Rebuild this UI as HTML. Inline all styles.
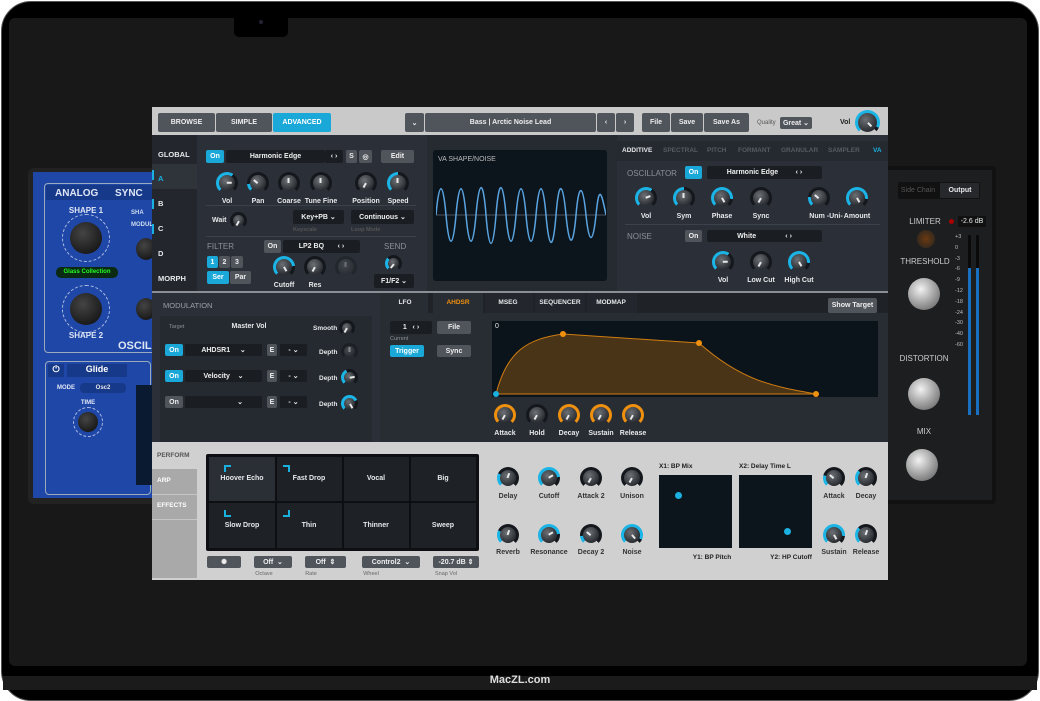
<!DOCTYPE html><html><head><meta charset="utf-8"><style>
*{margin:0;padding:0;box-sizing:border-box}
body{width:1040px;height:690px;background:#fff;position:relative;overflow:hidden;font-family:"Liberation Sans",sans-serif;font-weight:bold;color:#e6e8ea}
div,span{position:absolute}
.t{font-size:7px;white-space:nowrap;transform:translateX(-50%)}
.l{font-size:7px;white-space:nowrap}
.b{background:#50555c;border-radius:2px;font-size:7px;display:flex;align-items:center;justify-content:center;color:#eee}
.on{background:#1aa8d8;color:#fff}
.dk{background:#1a1e23}
.k{width:22px;height:22px;border-radius:50%;background:conic-gradient(from 225deg,var(--c,#1ab4e6) 0 var(--a,0deg),#14181c var(--a,0deg) 270deg,transparent 270deg)}
.k::after{content:"";position:absolute;left:3px;top:3px;right:3px;bottom:3px;border-radius:50%;background:radial-gradient(circle at 40% 35%,#6d7176,#2a2d31 70%)}
.k::before{content:"";position:absolute;left:50%;top:50%;width:1.5px;height:5px;margin-left:-0.75px;background:#e8e8e8;z-index:1;transform-origin:50% 0;transform:rotate(var(--r,180deg))}
.k.o{--c:#f0900f}
.m{border-radius:50%;background:radial-gradient(circle at 40% 35%,#f2f2f2,#9a9a9a 55%,#555 100%)}
.bk{border-radius:50%;background:radial-gradient(circle at 40% 35%,#444,#0b0b0b);box-shadow:0 0 0 4px rgba(255,255,255,.0)}
</style></head><body>
<!-- laptop -->
<div style="left:1px;top:1px;width:1038px;height:700px;background:#000;border-radius:30px;border:1px solid #555"></div>
<div style="left:9px;top:18px;width:1018px;height:648px;background:#181818;border-radius:6px"></div>
<div style="left:234px;top:17px;width:54px;height:20px;background:#000;border-radius:0 0 5px 5px"></div>
<div style="left:259px;top:20px;width:4px;height:4px;border-radius:50%;background:#223"></div>
<div style="left:3px;top:676px;width:1034px;height:14px;background:#1b1b1b"></div>
<div style="left:0;top:674px;width:1040px;text-align:center;font-size:11px;color:#ddd">MacZL.com</div>

<!-- blue synth -->
<div style="left:28px;top:168px;width:130px;height:336px;background:#222;border-radius:6px"></div>
<div style="left:33px;top:172px;width:122px;height:326px;background:#1f47a8"></div>
<div style="left:44px;top:183px;width:112px;height:170px;border:1px solid #9ab;border-radius:4px"></div>
<div style="left:46px;top:185px;width:110px;height:15px;background:#17398a"></div>
<div class="l" style="left:55px;top:188px;font-size:10px;color:#dfe6f5">ANALOG</div>
<div class="l" style="left:115px;top:188px;font-size:10px;color:#dfe6f5">SYNC</div>
<div class="t" style="left:86px;top:206px;font-size:8px;color:#dfe6f5">SHAPE 1</div>
<div style="left:62px;top:214px;width:48px;height:48px;border-radius:50%;border:1px dashed #cfd8f0;opacity:.8"></div>
<div class="bk" style="left:70px;top:222px;width:32px;height:32px"></div>
<div style="left:56px;top:267px;width:62px;height:11px;background:#0a2a14;border-radius:5px;font-size:6px;color:#2f2;text-align:center;line-height:11px">Glass Collection</div>
<div style="left:62px;top:285px;width:48px;height:48px;border-radius:50%;border:1px dashed #cfd8f0;opacity:.8"></div>
<div class="bk" style="left:70px;top:293px;width:32px;height:32px"></div>
<div class="t" style="left:86px;top:331px;font-size:8px;color:#dfe6f5">SHAPE 2</div>
<div class="l" style="left:118px;top:340px;font-size:11px;color:#dfe6f5">OSCIL</div>
<div style="left:131px;top:210px;width:24px;height:60px;font-size:6px;color:#cde">SHA<br><br>MODUL</div>
<div class="bk" style="left:136px;top:238px;width:20px;height:22px"></div>
<div class="bk" style="left:136px;top:298px;width:20px;height:22px"></div>
<div style="left:45px;top:361px;width:106px;height:134px;border:1px solid #9ab;border-radius:4px"></div>
<div style="left:48px;top:364px;width:16px;height:13px;background:#17398a;font-size:9px;color:#fff;text-align:center">⏻</div>
<div style="left:67px;top:364px;width:60px;height:13px;background:#17398a;font-size:9px;color:#fff;text-align:center">Glide</div>
<div class="l" style="left:57px;top:385px;font-size:6px;color:#dfe6f5">MODE</div>
<div style="left:80px;top:383px;width:46px;height:10px;background:#17398a;border-radius:4px;font-size:6px;text-align:center;line-height:10px">Osc2</div>
<div class="t" style="left:88px;top:400px;font-size:6px;color:#dfe6f5">TIME</div>
<div style="left:73px;top:407px;width:30px;height:30px;border-radius:50%;border:1px dashed #cfd8f0;opacity:.8"></div>
<div class="bk" style="left:78px;top:412px;width:20px;height:20px"></div>
<div style="left:136px;top:385px;width:16px;height:100px;background:#0a1a30"></div>

<!-- limiter -->
<div style="left:884px;top:166px;width:112px;height:338px;background:#111;border-radius:4px"></div>
<div style="left:888px;top:170px;width:104px;height:330px;background:#1d1e20"></div>
<div style="left:898px;top:182px;width:82px;height:17px;background:#111;border-radius:2px"></div>
<div class="t" style="left:918px;top:187px;color:#555;font-weight:normal">Side Chain</div>
<div style="left:940px;top:183px;width:39px;height:15px;background:#26282b"></div>
<div class="t" style="left:960px;top:187px">Output</div>
<div class="t" style="left:925px;top:217px;font-size:8px;color:#ccc;font-weight:normal">LIMITER</div>
<div style="left:949px;top:219px;width:5px;height:5px;border-radius:50%;background:#a00"></div>
<div style="left:958px;top:216px;width:28px;height:11px;background:#111;font-size:7px;text-align:center;line-height:11px;font-weight:normal">-2.6 dB</div>
<div style="left:917px;top:230px;width:18px;height:18px;border-radius:50%;background:radial-gradient(#6a3a10,#222)"></div>
<div class="t" style="left:925px;top:257px;font-size:8px;color:#ccc;font-weight:normal">THRESHOLD</div>
<div class="m" style="left:908px;top:278px;width:32px;height:32px"></div>
<div class="t" style="left:924px;top:354px;font-size:8px;color:#ccc;font-weight:normal">DISTORTION</div>
<div class="m" style="left:908px;top:378px;width:32px;height:32px"></div>
<div class="t" style="left:924px;top:427px;font-size:8px;color:#ccc;font-weight:normal">MIX</div>
<div class="m" style="left:906px;top:449px;width:32px;height:32px"></div>
<div style="left:968px;top:235px;width:3px;height:180px;background:#0a0a0a"></div><div style="left:968px;top:268px;width:3px;height:147px;background:#1a70c0"></div>
<div style="left:976px;top:235px;width:3px;height:180px;background:#0a0a0a"></div><div style="left:976px;top:268px;width:3px;height:147px;background:#1a70c0"></div>
<div style="left:955px;top:232px;font-size:5.5px;line-height:10.8px;color:#bbb;font-weight:normal">+3<br>0<br>-3<br>-6<br>-9<br>-12<br>-18<br>-24<br>-30<br>-40<br>-60</div>

<!-- plugin -->
<div style="left:152px;top:107px;width:736px;height:473px;background:#2b3038"></div>
<div style="left:152px;top:107px;width:736px;height:28px;background:#c9c9c9"></div>
<div class="b" style="left:158px;top:113px;width:57px;height:19px">BROWSE</div>
<div class="b" style="left:216px;top:113px;width:56px;height:19px">SIMPLE</div>
<div class="b on" style="left:273px;top:113px;width:58px;height:19px">ADVANCED</div>
<div class="b" style="left:405px;top:113px;width:19px;height:19px">⌄</div>
<div class="b" style="left:425px;top:113px;width:171px;height:19px">Bass | Arctic Noise Lead</div>
<div class="b" style="left:597px;top:113px;width:18px;height:19px">‹</div>
<div class="b" style="left:616px;top:113px;width:18px;height:19px">›</div>
<div class="b" style="left:642px;top:113px;width:28px;height:19px">File</div>
<div class="b" style="left:671px;top:113px;width:32px;height:19px">Save</div>
<div class="b" style="left:704px;top:113px;width:45px;height:19px">Save As</div>
<div class="l" style="left:757px;top:120px;font-size:6px;color:#555;font-weight:normal">Quality</div>
<div class="b" style="left:780px;top:117px;width:32px;height:12px">Great ⌄</div>
<div class="l" style="left:840px;top:119px;color:#222">Vol</div>
<div class="k" style="left:855px;top:110px;width:25px;height:25px;--a:250deg;--r:-45deg"></div>

<!-- left tabs -->
<div style="left:152px;top:135px;width:45px;height:157px;background:#23272d"></div>
<div style="left:152px;top:164px;width:45px;height:25px;background:#2f343b"></div>
<div class="l" style="left:158px;top:150px;font-size:7.5px">GLOBAL</div>
<div class="l" style="left:158px;top:174px;font-size:7.5px;color:#1ab0e0">A</div>
<div class="l" style="left:158px;top:199px;font-size:7.5px">B</div>
<div class="l" style="left:158px;top:224px;font-size:7.5px">C</div>
<div class="l" style="left:158px;top:249px;font-size:7.5px">D</div>
<div class="l" style="left:158px;top:274px;font-size:7.5px">MORPH</div>
<div style="left:152px;top:170px;width:2px;height:10px;background:#1ab0e0"></div>
<div style="left:152px;top:199px;width:2px;height:10px;background:#1ab0e0"></div>
<div style="left:152px;top:224px;width:2px;height:10px;background:#1ab0e0"></div>

<!-- osc section -->
<div class="b on" style="left:206px;top:150px;width:18px;height:13px">On</div>
<div class="b dk" style="left:226px;top:150px;width:99px;height:13px">Harmonic Edge</div>
<div class="b dk" style="left:325px;top:150px;width:18px;height:13px">‹ ›</div>
<div class="b" style="left:346px;top:150px;width:11px;height:13px">S</div>
<div class="b" style="left:359px;top:150px;width:13px;height:13px">◎</div>
<div class="b" style="left:381px;top:150px;width:33px;height:13px">Edit</div>
<div class="k" style="left:216px;top:172px;--a:170deg;--r:-90deg"></div><div class="t" style="left:227px;top:198px">Vol</div>
<div class="k" style="left:247px;top:172px;--a:40deg;--r:130deg"></div><div class="t" style="left:258px;top:198px">Pan</div>
<div class="k" style="left:278px;top:172px"></div><div class="t" style="left:289px;top:198px">Coarse</div>
<div class="k" style="left:310px;top:172px"></div><div class="t" style="left:321px;top:198px">Tune Fine</div>
<div class="k" style="left:355px;top:172px;--r:30deg"></div><div class="t" style="left:366px;top:198px">Position</div>
<div class="k" style="left:387px;top:172px;--a:135deg"></div><div class="t" style="left:398px;top:198px">Speed</div>
<div style="left:206px;top:205px;width:210px;height:1px;background:#3c424a"></div>
<div class="l" style="left:212px;top:217px">Wait</div><div class="k" style="left:230px;top:212px;width:17px;height:17px;--r:30deg"></div>
<div class="b dk" style="left:293px;top:210px;width:51px;height:14px">Key+PB ⌄</div>
<div class="l g" style="left:293px;top:227px;font-size:5.5px;color:#555">Keyscale</div>
<div class="b dk" style="left:351px;top:210px;width:63px;height:14px">Continuous ⌄</div>
<div class="l g" style="left:351px;top:227px;font-size:5.5px;color:#555">Loop Mode</div>
<div style="left:206px;top:236px;width:210px;height:1px;background:#3c424a"></div>
<div class="l" style="left:207px;top:242px;font-size:8px;color:#8a9098;font-weight:normal">FILTER</div>
<div class="b on" style="left:207px;top:256px;width:11px;height:12px">1</div>
<div class="b" style="left:219px;top:256px;width:11px;height:12px">2</div>
<div class="b" style="left:231px;top:256px;width:12px;height:12px">3</div>
<div class="b on" style="left:207px;top:271px;width:22px;height:13px">Ser</div>
<div class="b" style="left:230px;top:271px;width:21px;height:13px">Par</div>
<div class="b" style="left:264px;top:240px;width:17px;height:13px">On</div>
<div class="b dk" style="left:283px;top:240px;width:77px;height:13px">LP2 BQ &nbsp; &nbsp; &nbsp; ‹ ›</div>
<div class="l" style="left:384px;top:242px;font-size:8px;color:#8a9098;font-weight:normal">SEND</div>
<div class="k" style="left:273px;top:256px;--a:220deg;--r:-30deg"></div><div class="t" style="left:284px;top:282px">Cutoff</div>
<div class="k" style="left:304px;top:256px;--r:30deg"></div><div class="t" style="left:315px;top:282px">Res</div>
<div class="k" style="left:335px;top:256px;opacity:.35"></div>
<div class="k" style="left:385px;top:255px;width:17px;height:17px;--a:90deg;--r:40deg"></div>
<div class="b dk" style="left:374px;top:274px;width:40px;height:14px">F1/F2 ⌄</div>
<div style="left:427px;top:135px;width:190px;height:157px;background:#262b31"></div>
<div style="left:433px;top:150px;width:174px;height:131px;background:#0c141c;border-radius:3px"></div>
<div class="l" style="left:438px;top:156px;font-weight:normal;color:#bbb">VA SHAPE/NOISE</div>
<svg style="position:absolute;left:436px;top:185px" width="170" height="60"><line x1="0" y1="30" x2="170" y2="30" stroke="#4a5560"/><path d="M0 30 C3 -5 7 -5 10 30 S17 65 20 30 S27 -5 30 30 S37 65 40 30 S47 -8 50 30 S57 68 60 30 S67 -5 70 30 S77 65 80 30 S87 -5 90 30 S97 65 100 30 S107 -5 110 30 S117 68 120 30 S127 -2 130 30 S137 65 140 30 S147 0 150 30 S157 60 160 30 S165 5 170 30" fill="none" stroke="#5aa4e0" stroke-width="1.5"/></svg>

<!-- right panel -->
<div style="left:617px;top:135px;width:271px;height:157px;background:#2b3038"></div>
<div style="left:617px;top:141px;width:271px;height:20px;background:#252a30"></div>
<div class="l" style="left:622px;top:147px;font-size:6.5px">ADDITIVE</div>
<div class="l" style="left:663px;top:147px;font-size:6.5px;color:#555b63">SPECTRAL</div>
<div class="l" style="left:707px;top:147px;font-size:6.5px;color:#555b63">PITCH</div>
<div class="l" style="left:738px;top:147px;font-size:6.5px;color:#555b63">FORMANT</div>
<div class="l" style="left:781px;top:147px;font-size:6.5px;color:#555b63">GRANULAR</div>
<div class="l" style="left:828px;top:147px;font-size:6.5px;color:#555b63">SAMPLER</div>
<div class="l" style="left:873px;top:147px;font-size:6.5px;color:#1ab0e0">VA</div>
<div class="l" style="left:627px;top:169px;font-size:8px;color:#8a9098;font-weight:normal">OSCILLATOR</div>
<div class="b on" style="left:685px;top:166px;width:17px;height:13px">On</div>
<div class="b dk" style="left:707px;top:166px;width:115px;height:13px">Harmonic Edge &nbsp; &nbsp; &nbsp; &nbsp; ‹ ›</div>
<div class="k" style="left:635px;top:187px;--a:170deg;--r:-110deg"></div><div class="t" style="left:646px;top:213px">Vol</div>
<div class="k" style="left:673px;top:187px;--a:135deg"></div><div class="t" style="left:684px;top:213px">Sym</div>
<div class="k" style="left:711px;top:187px;--a:230deg;--r:-30deg"></div><div class="t" style="left:722px;top:213px">Phase</div>
<div class="k" style="left:750px;top:187px;--r:30deg"></div><div class="t" style="left:761px;top:213px">Sync</div>
<div class="k" style="left:808px;top:187px;--a:50deg;--r:130deg"></div><div class="t" style="left:826px;top:213px">Num -Uni-</div>
<div class="k" style="left:846px;top:187px;--a:230deg;--r:-30deg"></div><div class="t" style="left:857px;top:213px">Amount</div>
<div style="left:625px;top:224px;width:255px;height:1px;background:#3c424a"></div>
<div class="l" style="left:627px;top:232px;font-size:8px;color:#8a9098;font-weight:normal">NOISE</div>
<div class="b" style="left:685px;top:230px;width:17px;height:12px">On</div>
<div class="b dk" style="left:707px;top:230px;width:115px;height:12px">White &nbsp; &nbsp; &nbsp; &nbsp; &nbsp; &nbsp; &nbsp; ‹ ›</div>
<div class="k" style="left:712px;top:251px;--a:170deg;--r:-90deg"></div><div class="t" style="left:723px;top:277px">Vol</div>
<div class="k" style="left:750px;top:251px;--r:30deg"></div><div class="t" style="left:761px;top:277px">Low Cut</div>
<div class="k" style="left:788px;top:251px;--a:230deg;--r:-30deg"></div><div class="t" style="left:799px;top:277px">High Cut</div>

<!-- modulation -->
<div style="left:152px;top:291px;width:736px;height:2px;background:#8a8f95"></div>
<div style="left:152px;top:293px;width:228px;height:149px;background:#2b3038"></div>
<div class="l" style="left:163px;top:301px;font-size:7.5px;color:#9aa0a6;font-weight:normal">MODULATION</div>
<div style="left:160px;top:316px;width:212px;height:126px;background:#252a30"></div>
<div class="l" style="left:169px;top:324px;font-size:5.5px;color:#8a9098;font-weight:normal">Target</div>
<div class="t" style="left:249px;top:323px">Master Vol</div>
<div class="l" style="left:313px;top:325px;font-size:6.5px">Smooth</div>
<div class="k" style="left:339px;top:320px;width:16px;height:16px;--r:30deg"></div>
<div class="b on" style="left:165px;top:344px;width:18px;height:12px">On</div>
<div class="b dk" style="left:185px;top:344px;width:77px;height:12px">AHDSR1 &nbsp; &nbsp; ⌄</div>
<div class="b on" style="left:165px;top:370px;width:18px;height:12px">On</div>
<div class="b dk" style="left:185px;top:370px;width:77px;height:12px">Velocity &nbsp; &nbsp;⌄</div>
<div class="b" style="left:165px;top:396px;width:18px;height:12px">On</div>
<div class="b dk" style="left:185px;top:396px;width:77px;height:12px">&nbsp; &nbsp; &nbsp; &nbsp; &nbsp; &nbsp; &nbsp; &nbsp; &nbsp;⌄</div>
<div class="b" style="left:267px;top:344px;width:10px;height:12px">E</div>
<div class="b" style="left:267px;top:370px;width:10px;height:12px">E</div>
<div class="b" style="left:267px;top:396px;width:10px;height:12px">E</div>
<div class="b dk" style="left:280px;top:344px;width:27px;height:12px">- ⌄</div>
<div class="b dk" style="left:280px;top:370px;width:27px;height:12px">- ⌄</div>
<div class="b dk" style="left:280px;top:396px;width:27px;height:12px">- ⌄</div>
<div class="l" style="left:319px;top:349px;font-size:6.5px">Depth</div>
<div class="l" style="left:319px;top:375px;font-size:6.5px">Depth</div>
<div class="l" style="left:319px;top:401px;font-size:6.5px">Depth</div>
<div class="k" style="left:341px;top:343px;width:17px;height:17px;opacity:.5"></div>
<div class="k" style="left:341px;top:369px;width:17px;height:17px;--a:110deg;--r:-100deg"></div>
<div class="k" style="left:341px;top:395px;width:17px;height:17px;--a:200deg;--r:-30deg"></div>
<div style="left:380px;top:293px;width:508px;height:149px;background:#282d34"></div>
<div style="left:380px;top:293px;width:508px;height:20px;background:#1f2328"></div>
<div style="left:380px;top:293px;width:48px;height:20px;background:#282d34"></div>
<div style="left:433px;top:293px;width:50px;height:20px;background:#282d34"></div>
<div style="left:485px;top:293px;width:48px;height:20px;background:#23272d"></div>
<div style="left:535px;top:293px;width:50px;height:20px;background:#23272d"></div>
<div style="left:587px;top:293px;width:50px;height:20px;background:#23272d"></div>
<div class="t" style="left:405px;top:299px;font-size:6.5px">LFO</div>
<div class="t" style="left:458px;top:299px;font-size:6.5px;color:#f0900f">AHDSR</div>
<div class="t" style="left:508px;top:299px;font-size:6.5px">MSEG</div>
<div class="t" style="left:560px;top:299px;font-size:6.5px">SEQUENCER</div>
<div class="t" style="left:611px;top:299px;font-size:6.5px">MODMAP</div>
<div class="b" style="left:828px;top:298px;width:49px;height:15px">Show Target</div>
<div class="b dk" style="left:390px;top:321px;width:42px;height:13px">1 &nbsp; ‹ ›</div>
<div class="b" style="left:437px;top:321px;width:34px;height:13px">File</div>
<div class="l" style="left:390px;top:336px;font-size:5.5px;color:#8a9098;font-weight:normal">Current</div>
<div class="b on" style="left:390px;top:345px;width:34px;height:12px">Trigger</div>
<div class="b" style="left:437px;top:345px;width:34px;height:12px">Sync</div>
<div style="left:492px;top:321px;width:386px;height:76px;background:#0b131b"></div>
<div class="l" style="left:495px;top:323px;font-weight:normal">0</div>
<svg style="position:absolute;left:492px;top:321px" width="386" height="76"><path d="M4 73 C15 30 35 18 71 13 L207 22 C250 60 280 65 324 73 Z" fill="#4a3418" stroke="#d07d10" stroke-width="1"/><circle cx="4" cy="73" r="3" fill="#1ab0e0"/><circle cx="71" cy="13" r="3" fill="#f0900f"/><circle cx="207" cy="22" r="3" fill="#f0900f"/><circle cx="324" cy="73" r="3" fill="#f0900f"/></svg>
<div class="k o" style="left:494px;top:404px;--a:270deg;--r:30deg"></div><div class="t" style="left:505px;top:430px">Attack</div>
<div class="k" style="left:526px;top:404px;--c:#555;--r:30deg"></div><div class="t" style="left:537px;top:430px">Hold</div>
<div class="k o" style="left:558px;top:404px;--a:270deg;--r:30deg"></div><div class="t" style="left:569px;top:430px">Decay</div>
<div class="k o" style="left:590px;top:404px;--a:270deg;--r:30deg"></div><div class="t" style="left:601px;top:430px">Sustain</div>
<div class="k o" style="left:622px;top:404px;--a:270deg;--r:30deg"></div><div class="t" style="left:633px;top:430px">Release</div>

<!-- perform -->
<div style="left:152px;top:442px;width:736px;height:138px;background:#d0d0d0"></div>
<div class="l" style="left:157px;top:452px;font-size:6.5px;color:#555">PERFORM</div>
<div style="left:152px;top:469px;width:45px;height:109px;background:#a9a9a9"></div>
<div style="left:152px;top:494px;width:45px;height:1px;background:#c5c5c5"></div>
<div style="left:152px;top:519px;width:45px;height:1px;background:#c5c5c5"></div>
<div class="l" style="left:157px;top:477px;font-size:6.5px;color:#fff">ARP</div>
<div class="l" style="left:157px;top:502px;font-size:6.5px;color:#fff">EFFECTS</div>
<div style="left:206px;top:454px;width:273px;height:97px;background:#0d0f12;border-radius:2px"></div>
<div style="left:209px;top:457px;width:66px;height:44px;background:#2a2f36"></div>
<div style="left:277px;top:457px;width:65px;height:44px;background:#1e2227"></div>
<div style="left:344px;top:457px;width:65px;height:44px;background:#1e2227"></div>
<div style="left:411px;top:457px;width:65px;height:44px;background:#1e2227"></div>
<div style="left:209px;top:503px;width:66px;height:45px;background:#1e2227"></div>
<div style="left:277px;top:503px;width:65px;height:45px;background:#1e2227"></div>
<div style="left:344px;top:503px;width:65px;height:45px;background:#1e2227"></div>
<div style="left:411px;top:503px;width:65px;height:45px;background:#1e2227"></div>
<div style="left:224px;top:465px;width:7px;height:7px;border-left:2px solid #1ab0e0;border-top:2px solid #1ab0e0"></div>
<div style="left:283px;top:465px;width:7px;height:7px;border-right:2px solid #1ab0e0;border-top:2px solid #1ab0e0"></div>
<div style="left:224px;top:510px;width:7px;height:7px;border-left:2px solid #1ab0e0;border-bottom:2px solid #1ab0e0"></div>
<div style="left:283px;top:510px;width:7px;height:7px;border-right:2px solid #1ab0e0;border-bottom:2px solid #1ab0e0"></div>
<div class="t" style="left:242px;top:475px">Hoover Echo</div>
<div class="t" style="left:309px;top:475px">Fast Drop</div>
<div class="t" style="left:376px;top:475px">Vocal</div>
<div class="t" style="left:443px;top:475px">Big</div>
<div class="t" style="left:242px;top:522px">Slow Drop</div>
<div class="t" style="left:309px;top:522px">Thin</div>
<div class="t" style="left:376px;top:522px">Thinner</div>
<div class="t" style="left:443px;top:522px">Sweep</div>
<div class="b" style="left:207px;top:556px;width:34px;height:12px">✺</div>
<div class="b" style="left:254px;top:556px;width:38px;height:12px">Off &nbsp;⌄</div>
<div class="b" style="left:305px;top:556px;width:41px;height:12px">Off &nbsp;⇕</div>
<div class="b" style="left:362px;top:556px;width:58px;height:12px">Control2 &nbsp;⌄</div>
<div class="b" style="left:433px;top:556px;width:46px;height:12px">-20.7 dB ⇕</div>
<div class="t" style="left:264px;top:571px;font-size:5.5px;color:#666;font-weight:normal">Octave</div>
<div class="t" style="left:311px;top:571px;font-size:5.5px;color:#666;font-weight:normal">Rate</div>
<div class="t" style="left:371px;top:571px;font-size:5.5px;color:#666;font-weight:normal">Wheel</div>
<div class="t" style="left:446px;top:571px;font-size:5.5px;color:#666;font-weight:normal">Snap Vol</div>
<div class="k" style="left:497px;top:467px;--a:70deg;--r:-160deg"></div><div class="t" style="left:508px;top:493px;color:#333">Delay</div>
<div class="k" style="left:538px;top:467px;--a:220deg;--r:-120deg"></div><div class="t" style="left:549px;top:493px;color:#333">Cutoff</div>
<div class="k" style="left:580px;top:467px;--r:30deg"></div><div class="t" style="left:591px;top:493px;color:#333">Attack 2</div>
<div class="k" style="left:621px;top:467px;--r:30deg"></div><div class="t" style="left:632px;top:493px;color:#333">Unison</div>
<div class="k" style="left:497px;top:524px;--a:70deg;--r:-160deg"></div><div class="t" style="left:508px;top:549px;color:#333">Reverb</div>
<div class="k" style="left:538px;top:524px;--a:220deg;--r:-120deg"></div><div class="t" style="left:549px;top:549px;color:#333">Resonance</div>
<div class="k" style="left:580px;top:524px;--a:40deg;--r:130deg"></div><div class="t" style="left:591px;top:549px;color:#333">Decay 2</div>
<div class="k" style="left:621px;top:524px;--a:250deg;--r:-40deg"></div><div class="t" style="left:632px;top:549px;color:#333">Noise</div>
<div class="l" style="left:659px;top:463px;font-size:6.5px;color:#222">X1: BP Mix</div>
<div class="l" style="left:739px;top:463px;font-size:6.5px;color:#222">X2: Delay Time L</div>
<div style="left:659px;top:475px;width:73px;height:73px;background:#0c141c"></div>
<div style="left:739px;top:475px;width:73px;height:73px;background:#0c141c"></div>
<div style="left:675px;top:492px;width:7px;height:7px;border-radius:50%;background:#1ab0e0"></div>
<div style="left:784px;top:528px;width:7px;height:7px;border-radius:50%;background:#1ab0e0"></div>
<div class="t" style="left:712px;top:554px;font-size:6.5px;color:#222">Y1: BP Pitch</div>
<div class="t" style="left:791px;top:554px;font-size:6.5px;color:#222">Y2: HP Cutoff</div>
<div class="k" style="left:823px;top:467px;--a:60deg;--r:130deg"></div><div class="t" style="left:834px;top:493px;color:#333">Attack</div>
<div class="k" style="left:855px;top:467px;--a:90deg;--r:-160deg"></div><div class="t" style="left:866px;top:493px;color:#333">Decay</div>
<div class="k" style="left:823px;top:524px;--a:230deg;--r:-30deg"></div><div class="t" style="left:834px;top:549px;color:#333">Sustain</div>
<div class="k" style="left:855px;top:524px;--a:90deg;--r:-160deg"></div><div class="t" style="left:866px;top:549px;color:#333">Release</div>
</body></html>
